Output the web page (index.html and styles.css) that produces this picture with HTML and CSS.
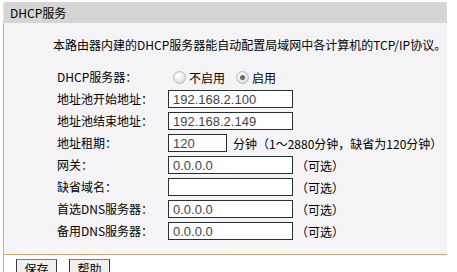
FILE: index.html
```html
<!DOCTYPE html>
<html lang="zh-CN">
<head>
<meta charset="utf-8">
<title>DHCP服务</title>
<link rel="stylesheet" href="styles.css">
</head>
<body>
<div class="page">
  <div class="title">DHCP服务</div>
  <div class="panel">
    <div class="content">
      <p class="desc">本路由器内建的DHCP服务器能自动配置局域网中各计算机的TCP/IP协议。</p>
      <div class="form">
        <div class="row">
          <span class="label">DHCP服务器：</span>
          <span class="field">
            <span class="radio"><span class="circle"></span>不启用</span>
            <span class="radio on"><span class="circle"></span>启用</span>
          </span>
        </div>
        <div class="row">
          <span class="label">地址池开始地址：</span>
          <span class="field"><input class="text" type="text" value="192.168.2.100"></span>
        </div>
        <div class="row">
          <span class="label">地址池结束地址：</span>
          <span class="field"><input class="text" type="text" value="192.168.2.149"></span>
        </div>
        <div class="row">
          <span class="label">地址租期：</span>
          <span class="field"><input class="text short" type="text" value="120"><span class="unit">分钟</span><span class="hint">（1～2880分钟，缺省为120分钟）</span></span>
        </div>
        <div class="row">
          <span class="label">网关：</span>
          <span class="field"><input class="text" type="text" value="0.0.0.0"><span class="opt">（可选）</span></span>
        </div>
        <div class="row">
          <span class="label">缺省域名：</span>
          <span class="field"><input class="text" type="text" value=""><span class="opt">（可选）</span></span>
        </div>
        <div class="row">
          <span class="label">首选DNS服务器：</span>
          <span class="field"><input class="text" type="text" value="0.0.0.0"><span class="opt">（可选）</span></span>
        </div>
        <div class="row">
          <span class="label">备用DNS服务器：</span>
          <span class="field"><input class="text" type="text" value="0.0.0.0"><span class="opt">（可选）</span></span>
        </div>
      </div>
    </div>
    <div class="footer">
      <span class="btn">保存</span>
      <span class="btn">帮助</span>
    </div>
  </div>
</div>
</body>
</html>
```
FILE: styles.css
```css
html, body {
  margin: 0;
  padding: 0;
  background: #ffffff;
  overflow: hidden;
}
body {
  font-family: "Noto Sans CJK SC", "Noto Sans", sans-serif;
  font-size: 12px;
  color: #000;
}
.page {
  margin: 2px 0 0 3px;
  width: 444px;
}
.title {
  height: 21px;
  line-height: 21px;
  padding-left: 6px;
  background: #d5d5d5;
  border-left: 1px solid #e4e4e4;
  font-size: 12px;
}
.panel {
  border-left: 1px solid #cfb487;
}
.content {
  background: #f4f4f7;
  padding: 14px 0 12px 0;
  border-bottom: 1px solid #d8a468;
}
.desc {
  margin: 0 0 13px 49px;
  line-height: 16px;
  font-size: 12px;
  white-space: nowrap;
}
.form {
  margin-left: 53px;
}
.row {
  display: grid;
  grid-template-columns: 111px auto;
  align-items: center;
  height: 22px;
}
.label {
  line-height: 16px;
  white-space: nowrap;
}
.field {
  display: flex;
  align-items: center;
  white-space: nowrap;
}
.radio {
  display: flex;
  align-items: center;
  margin-left: 5px;
  margin-right: 11px;
}
.radio + .radio {
  margin-left: 0;
}
.circle {
  width: 11px;
  height: 11px;
  border-radius: 50%;
  border: 1px solid #b9b9b9;
  background: radial-gradient(circle at 40% 35%, #ffffff 0%, #e6e6e6 60%, #cfcfcf 100%);
  margin-right: 3px;
  position: relative;
}
.radio.on .circle::after {
  content: "";
  position: absolute;
  left: 3px;
  top: 3px;
  width: 5px;
  height: 5px;
  border-radius: 50%;
  background: #6a6a6a;
}
.text {
  box-sizing: border-box;
  width: 125px;
  height: 18px;
  margin: 0;
  padding: 0 4px;
  border: 1px solid #253232;
  background: #fff;
  font-family: "Liberation Sans", Arial, sans-serif;
  font-size: 13px;
  color: #444;
  outline: none;
}
.text.short {
  width: 59px;
}
.unit {
  margin-left: 6px;
}
.hint {
  margin-left: 0;
}
.opt {
  margin-left: 3px;
}
.footer {
  display: flex;
  gap: 12px;
  padding: 4px 0 0 12px;
  height: 20px;
}
.btn {
  box-sizing: border-box;
  width: 41px;
  height: 20px;
  border: 1px solid #3a3a3a;
  border-top-color: #6f7f9a;
  background: #f0f0f0;
  text-align: center;
  line-height: 18px;
  font-size: 12px;
}
```
